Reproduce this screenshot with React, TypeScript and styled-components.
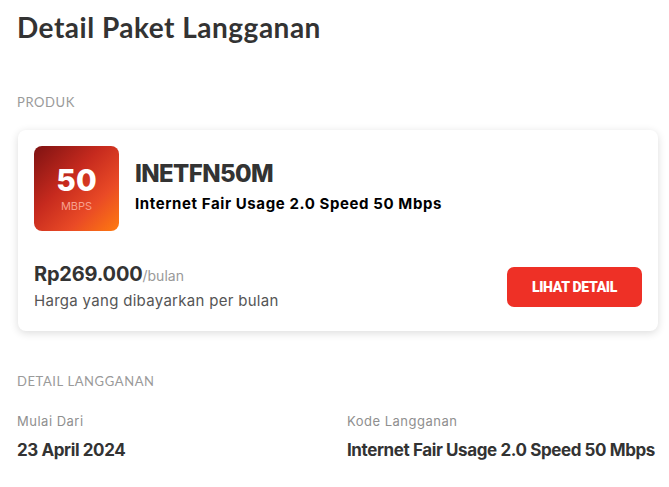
import React from "react";
import styled, { createGlobalStyle } from "styled-components";

const GlobalStyle = createGlobalStyle`
  html, body {
    margin: 0;
    padding: 0;
    background: #ffffff;
    font-family: "Lato", "Liberation Sans", sans-serif;
  }
`;

const components = {
  Page: styled.main`
    padding: 10px 11px 0 17px;
  `,
  Title: styled.h1`
    margin: 0;
    font-family: "Lato", sans-serif;
    font-size: 28px;
    font-weight: 700;
    line-height: 34px;
    letter-spacing: 0.5px;
    color: #333333;
  `,
  SectionLabel: styled.div<{ $top: number }>`
    margin-top: ${p => p.$top}px;
    font-family: "Lato", sans-serif;
    font-size: 13px;
    letter-spacing: 0.6px;
    color: #9a9a9a;
    text-transform: uppercase;
  `,
  Card: styled.section`
    margin: 20px 0 0 1px;
    padding: 16px 16px 21px 16px;
    background: #ffffff;
    border-radius: 8px;
    box-shadow: 0 2px 8px rgba(0, 0, 0, 0.14);
  `,
  Head: styled.div`
    display: flex;
    gap: 16px;
  `,
  Badge: styled.div`
    width: 85px;
    height: 85px;
    border-radius: 8px;
    background: linear-gradient(135deg, #7e1212 0%, #c62a1e 40%, #e94a26 70%, #ff7b0f 100%);
    display: flex;
    flex-direction: column;
    align-items: center;
    justify-content: center;
  `,
  Speed: styled.div`
    font-family: "Inter", sans-serif;
    font-size: 30px;
    font-weight: 800;
    line-height: 32px;
    color: #ffffff;
  `,
  Unit: styled.div`
    font-family: "Inter", sans-serif;
    font-size: 11px;
    line-height: 14px;
    margin-top: 3px;
    color: #f8a08e;
  `,
  Info: styled.div`
    padding-top: 14px;
  `,
  Code: styled.div`
    font-family: "Inter", sans-serif;
    font-size: 24px;
    font-weight: 800;
    line-height: 28px;
    letter-spacing: -0.6px;
    color: #333333;
  `,
  Name: styled.div`
    margin-top: 6px;
    font-family: "Inter", sans-serif;
    font-size: 15px;
    font-weight: 700;
    letter-spacing: 0.6px;
    color: #000000;
  `,
  Foot: styled.div`
    margin-top: 31px;
    display: flex;
    align-items: center;
    justify-content: space-between;
  `,
  Price: styled.div`
    font-family: "Inter", sans-serif;
    font-size: 20px;
    font-weight: 700;
    color: #333333;
    letter-spacing: -0.2px;
    span {
      font-size: 14px;
      font-weight: 400;
      color: #999999;
      letter-spacing: 0;
    }
  `,
  PriceNote: styled.div`
    margin-top: 5px;
    font-family: "Inter", sans-serif;
    font-size: 15px;
    letter-spacing: 0.3px;
    color: #555555;
  `,
  Button: styled.button`
    width: 135px;
    height: 40px;
    margin-top: 2px;
    border: 0;
    border-radius: 7px;
    background: #ee3026;
    color: #ffffff;
    font-family: "Roboto", sans-serif;
    font-size: 14px;
    font-weight: 900;
    letter-spacing: -0.3px;
  `,
  Grid: styled.div`
    margin-top: 24px;
    display: grid;
    grid-template-columns: 330px 1fr;
  `,
  FieldLabel: styled.div`
    font-family: "Inter", sans-serif;
    font-size: 13px;
    letter-spacing: 0.5px;
    color: #8f8f8f;
  `,
  FieldValue: styled.div`
    margin-top: 11px;
    font-family: "Inter", sans-serif;
    font-size: 17px;
    font-weight: 700;
    letter-spacing: -0.4px;
    color: #333333;
  `
};

const fields = [
  { label: "Mulai Dari", value: "23 April 2024" },
  { label: "Kode Langganan", value: "Internet Fair Usage 2.0 Speed 50 Mbps" }
];

export default function App() {
  return (
    <>
      <GlobalStyle />
      <components.Page>
        <components.Title>Detail Paket Langganan</components.Title>
        <components.SectionLabel $top={50}>Produk</components.SectionLabel>
        <components.Card>
          <components.Head>
            <components.Badge>
              <components.Speed>50</components.Speed>
              <components.Unit>MBPS</components.Unit>
            </components.Badge>
            <components.Info>
              <components.Code>INETFN50M</components.Code>
              <components.Name>Internet Fair Usage 2.0 Speed 50 Mbps</components.Name>
            </components.Info>
          </components.Head>
          <components.Foot>
            <div>
              <components.Price>
                Rp269.000<span>/bulan</span>
              </components.Price>
              <components.PriceNote>Harga yang dibayarkan per bulan</components.PriceNote>
            </div>
            <components.Button>LIHAT DETAIL</components.Button>
          </components.Foot>
        </components.Card>
        <components.SectionLabel $top={42}>Detail Langganan</components.SectionLabel>
        <components.Grid>
          {fields.map(f => (
            <div key={f.label}>
              <components.FieldLabel>{f.label}</components.FieldLabel>
              <components.FieldValue>{f.value}</components.FieldValue>
            </div>
          ))}
        </components.Grid>
      </components.Page>
    </>
  );
}
